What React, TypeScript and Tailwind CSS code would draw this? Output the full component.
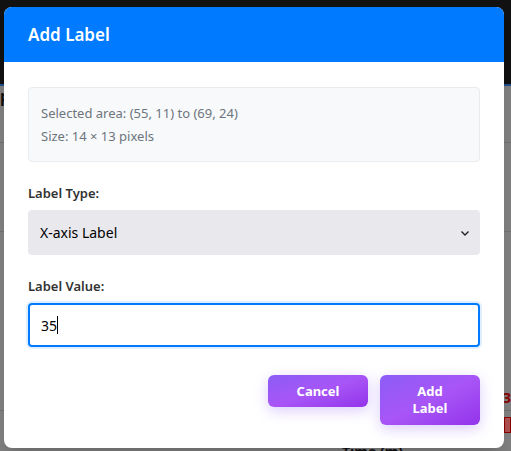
import React from "react";

export default function App() {
  return (
    <div
      className="relative w-[511px] h-[451px] overflow-hidden bg-[#808080]"
      style={{ fontFamily: '"Noto Sans", "Open Sans", sans-serif' }}
    >
      {/* background page (dimmed) */}
      <div className="flex flex-col">
        <div className="h-[84px] bg-[#111111]" />
        <div className="h-[2px] bg-[#1f4f8f]" />
        <div className="h-[57px] border-b border-[#707070] pt-0 text-[16px] font-bold text-[#111] leading-5">p</div>
        <div className="h-[89px] border-b border-[#707070]" />
        <div className="h-[179px] border-b border-[#707070] flex flex-col items-end justify-end pb-1">
          <span className="text-[14px] font-bold text-[#8b0000] leading-4">3</span>
        </div>
        <div className="flex flex-col items-end pt-[6px]">
          <div className="w-[7px] h-[16px] bg-[#b05050] border border-[#8b0000]" />
          <div className="self-start ml-[342px] mt-[11px] text-[14px] font-bold text-[#111] leading-4">Time (m)</div>
        </div>
      </div>

      {/* modal */}
      <div className="absolute left-[4px] top-[7px] w-[500px] bg-white rounded-[8px] overflow-hidden shadow-xl">
        <div className="h-[55px] bg-[#007bff] flex items-center px-6">
          <h2 className="text-white text-[17px] font-semibold leading-6">Add Label</h2>
        </div>
        <div className="px-6 pt-[25px] pb-[23px]">
          <div className="bg-[#f8f9fa] border border-[#e9ecef] rounded-[4px] px-3 py-[15px] text-[13px] leading-5 text-[#6c757d] flex flex-col gap-[3px]">
            <p>Selected area: (55, 11) to (69, 24)</p>
            <p>Size: 14 × 13 pixels</p>
          </div>

          <div className="mt-[22px]">
            <div className="text-[13px] font-semibold leading-[18px] text-[#333]">Label Type:</div>
            <div className="mt-2 h-[45px] bg-[#e9e8ec] rounded-[4px] flex items-center justify-between pl-3 pr-[10px]">
              <span className="text-[14px] text-black">X-axis Label</span>
              <svg width="10" height="10" viewBox="0 0 10 10" fill="none">
                <path d="M1.5 3.5 L5 7 L8.5 3.5" stroke="#222" strokeWidth="1.4" />
              </svg>
            </div>
          </div>

          <div className="mt-[22px]">
            <div className="text-[13px] font-semibold leading-[18px] text-[#333]">Label Value:</div>
            <div className="mt-2 h-[44px] border-2 border-[#007bff] rounded-[4px] flex items-center pl-[11px] shadow-[0_0_0_2px_rgba(0,123,255,0.12)]">
              <span className="text-[14px] text-black">35</span>
              <span className="w-px h-[18px] bg-black" />
            </div>
          </div>

          <div className="mt-[28px] flex justify-end items-start gap-3">
            <button className="w-[100px] px-6 py-2 rounded-[6px] text-white text-[13px] font-bold leading-4 bg-gradient-to-br from-[#8b5cf6] via-[#a855f7] to-[#9333ea] shadow-[0_4px_14px_rgba(139,92,246,0.3)]">
              Cancel
            </button>
            <button className="w-[100px] px-6 py-2 rounded-[6px] text-white text-[13px] font-bold leading-[17px] bg-gradient-to-br from-[#8b5cf6] via-[#a855f7] to-[#9333ea] shadow-[0_4px_14px_rgba(139,92,246,0.3)]">
              Add Label
            </button>
          </div>
        </div>
      </div>
    </div>
  );
}
